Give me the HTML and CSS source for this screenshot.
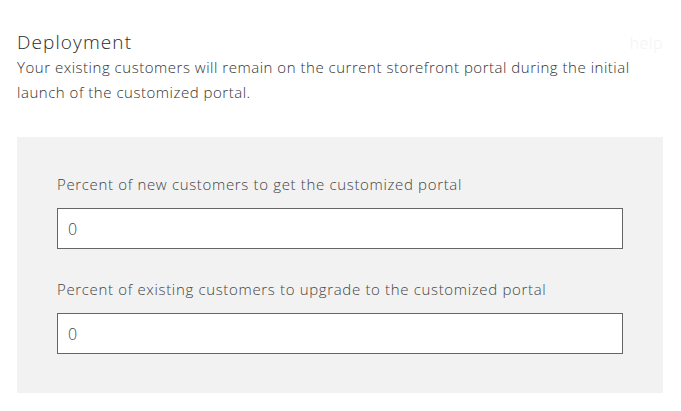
FILE: index.html
```html
<!DOCTYPE html>
<html>
<head>
<meta charset="utf-8">
<link rel="stylesheet" href="styles.css">
</head>
<body>
<div class="page">
  <div class="header">
    <h2 class="title">Deployment</h2>
    <a class="help">help</a>
  </div>
  <p class="desc">Your existing customers will remain on the current storefront portal during the initial launch of the customized portal.</p>
  <div class="panel">
    <div class="field">
      <label class="label">Percent of new customers to get the customized portal</label>
      <input class="input" type="text" value="0">
    </div>
    <div class="field">
      <label class="label">Percent of existing customers to upgrade to the customized portal</label>
      <input class="input" type="text" value="0">
    </div>
  </div>
</div>
</body>
</html>
```
FILE: styles.css
```css
html, body {
  margin: 0;
  padding: 0;
  background: #fff;
}
body {
  font-family: "Open Sans", Lato, sans-serif;
  font-weight: 300;
  color: #333;
}
.page {
  padding: 29px 18px 0 17px;
}
.header {
  display: flex;
  justify-content: space-between;
  align-items: center;
  height: 26px;
}
.title {
  margin: 0;
  font-size: 19px;
  font-weight: 300;
  letter-spacing: 1.1px;
  color: #2b2b2b;
}
.help {
  font-size: 16px;
  letter-spacing: 0.5px;
  color: #f3f3f3;
  margin-top: 2px;
}
.desc {
  margin: 0;
  font-size: 15px;
  line-height: 25px;
  letter-spacing: 0.52px;
  color: #333;
}
.panel {
  margin-top: 32px;
  background: #f2f2f2;
  padding: 36px 40px 39px 40px;
  display: flex;
  flex-direction: column;
  gap: 29px;
}
.field {
  display: flex;
  flex-direction: column;
  gap: 13px;
}
.label {
  font-size: 15px;
  line-height: 22px;
  letter-spacing: 0.66px;
  color: #444;
}
.input {
  box-sizing: border-box;
  height: 41px;
  width: 100%;
  border: 1px solid #666;
  background: #fff;
  padding: 0 10px;
  font-family: "Open Sans", sans-serif;
  font-weight: 300;
  font-size: 16px;
  color: #444;
  margin: 0;
}
```
